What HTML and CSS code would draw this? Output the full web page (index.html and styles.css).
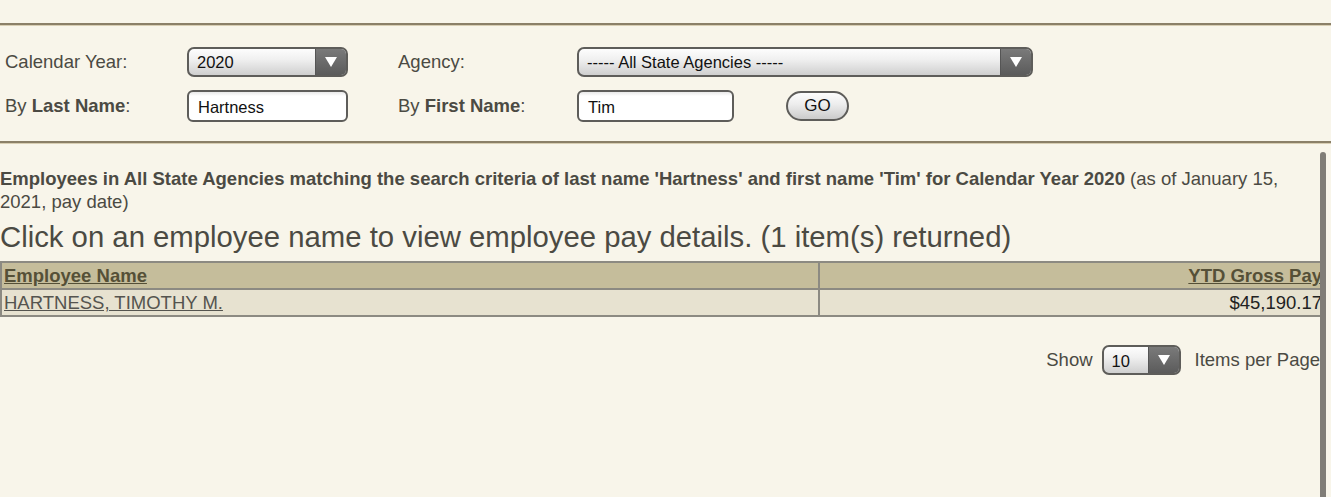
FILE: index.html
```html
<!DOCTYPE html>
<html lang="en">
<head>
<meta charset="UTF-8" />
<meta name="viewport" content="width=device-width, initial-scale=1" />
<title>Employee Pay Search</title>
<link rel="stylesheet" href="styles.css">
</head>
<body>
<div class="top-strip"></div>

<form class="search-panel">
  <div class="search-grid">
    <label class="lbl">Calendar Year:</label>
    <div class="select sel-year"><span class="val">2020</span><span class="arrow"></span></div>
    <label class="lbl">Agency:</label>
    <div class="select sel-agency"><span class="val">----- All State Agencies -----</span><span class="arrow"></span></div>

    <label class="lbl">By <b>Last Name</b>:</label>
    <div class="txt txt-last">Hartness</div>
    <label class="lbl">By <b>First Name</b>:</label>
    <div class="first-row">
      <div class="txt txt-first">Tim</div>
      <button type="button" class="go">GO</button>
    </div>
  </div>
</form>

<div class="results">
  <p class="criteria"><b>Employees in All State Agencies matching the search criteria of last name 'Hartness' and first name 'Tim' for Calendar Year 2020</b> (as of January 15, 2021, pay date)</p>
  <h2 class="hint">Click on an employee name to view employee pay details. (1 item(s) returned)</h2>

  <table class="grid">
    <thead>
      <tr><th class="c-name"><a href="#">Employee Name</a></th><th class="c-pay"><a href="#">YTD Gross Pay</a></th></tr>
    </thead>
    <tbody>
      <tr><td class="c-name"><a href="#">HARTNESS, TIMOTHY M.</a></td><td class="c-pay">$45,190.17</td></tr>
    </tbody>
  </table>

  <div class="pager">
    <span>Show</span>
    <div class="select sel-page"><span class="val">10</span><span class="arrow"></span></div>
    <span>Items per Page</span>
  </div>
</div>

<div class="scrollbar"></div>
</body>
</html>
```

FILE: styles.css
```css
body {
  margin: 0; padding: 0; background: #f8f5ea; color: #4b4a43;
  font-family: "Liberation Sans", Arial, sans-serif; font-size: 18.5px;
  overflow: hidden;
}

.top-strip { height: 23px; }

/* Panel de busqueda */
.search-panel {
  margin: 0;
  border-top: 2px solid #8b8068;
  border-bottom: 2px solid #8b8068;
  box-shadow: 0 1px 0 #d8ceb3, inset 0 1px 0 #d8ceb3;
  padding: 22px 0 19px 5px;
}
.search-grid {
  display: grid;
  grid-template-columns: 182px 161px 50px 179px auto;
  grid-template-rows: 30px 32px;
  row-gap: 13px;
  align-items: center;
}
.search-grid .lbl:nth-of-type(2), .search-grid .lbl:nth-of-type(4) { grid-column: 4; }
.lbl b { color: #4b4a43; }

.select {
  display: flex; box-sizing: border-box; height: 30px;
  border: 2px solid #5e5d5a; border-radius: 7px; overflow: hidden;
  background: linear-gradient(#fdfdfd, #f0f0f0 40%, #cfcfcf);
  color: #111; font-size: 16.5px;
}
.select .val { flex: 1; padding: 4px 0 0 8px; white-space: nowrap; }
.select .arrow {
  width: 30px; position: relative;
  background: linear-gradient(#7a7a7a, #5b5b5b);
  border-left: 1px solid #555;
}
.select .arrow::after {
  content: ""; position: absolute; left: 50%; top: 8px; margin-left: -6px;
  border-left: 6px solid transparent; border-right: 6px solid transparent;
  border-top: 10px solid #fff;
}
.sel-year { width: 161px; }
.sel-agency { width: 456px; }

.txt {
  box-sizing: border-box; height: 32px; width: 161px;
  border: 2px solid #5e5d5a; border-radius: 6px;
  background: linear-gradient(#e9e9e9, #fff 4px);
  color: #111; font-size: 16.5px; padding: 6px 0 0 9px;
}
.txt-first { width: 157px; }
.first-row { display: flex; align-items: center; gap: 52px; }

.go {
  width: 63px; height: 30px; margin: 0; padding: 0;
  border: 2px solid #5e5d5a; border-radius: 15px;
  background: linear-gradient(#fdfdfd, #ececec 45%, #cbcbcb);
  font-family: inherit; font-size: 17px; color: #111;
}

/* Resultados */
.results { padding: 24px 0 0 0; }
.criteria {
  margin: 0 10px 0 0; line-height: 23px; font-size: 18.5px;
  color: #4b4a43;
}
.hint {
  margin: 7px 0 7px 0; font-weight: normal; font-size: 29.3px;
  line-height: 34px; color: #4b4a43;
}

.grid {
  width: 1326px; border-collapse: collapse;
  border: 2px solid #8c8a82;
}
.grid th, .grid td {
  border: 2px solid #8c8a82; padding: 0 2px;
  height: 25px; line-height: 25px; font-size: 18.5px;
}
.grid th { background: #c5bd9b; font-weight: bold; }
.grid th a { color: #555037; }
.grid td { background: #e7e2d0; }
.grid td a { color: #55544f; }
.grid .c-name { width: 812px; text-align: left; }
.grid .c-pay { text-align: right; color: #222; }

.pager {
  display: flex; align-items: center; justify-content: flex-end;
  padding: 28px 11px 0 0; font-size: 18.5px; color: #4b4a43;
}
.pager .sel-page { width: 79px; margin: 0 14px 0 9px; height: 30px; }
.pager .sel-page .val { padding-top: 5px; }

.scrollbar {
  position: fixed; left: 1320px; top: 152px; bottom: 0; width: 6px;
  background: #807d77; border-radius: 3px 3px 0 0;
}
```
